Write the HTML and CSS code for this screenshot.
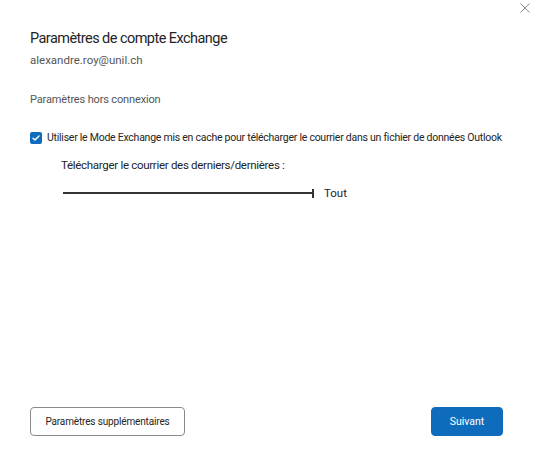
FILE: index.html
```html
<!DOCTYPE html>
<html lang="fr">
<head>
<meta charset="utf-8">
<link rel="stylesheet" href="styles.css">
</head>
<body>
<div class="dialog">
  <button class="close" aria-label="Fermer">
    <svg width="10" height="10" viewBox="0 0 10 10"><path d="M0.5 0.5L9.5 9.5M9.5 0.5L0.5 9.5" stroke="#8a8a8a" stroke-width="1" fill="none"/></svg>
  </button>
  <h1 class="title">Paramètres de compte Exchange</h1>
  <div class="email">alexandre.roy@unil.ch</div>
  <div class="section">Paramètres hors connexion</div>
  <label class="check-row">
    <span class="checkbox">
      <svg width="12" height="12" viewBox="0 0 12 12"><path d="M3 6.2L5 8.1L9 4" stroke="#fff" stroke-width="1.4" fill="none" stroke-linecap="round" stroke-linejoin="round"/></svg>
    </span>
    <span class="check-label">Utiliser le Mode Exchange mis en cache pour télécharger le courrier dans un fichier de données Outlook</span>
  </label>
  <div class="download-label">Télécharger le courrier des derniers/dernières :</div>
  <div class="slider-row">
    <div class="slider"><span class="track"></span><span class="tick"></span></div>
    <span class="slider-value">Tout</span>
  </div>
  <div class="footer">
    <button class="btn btn-secondary">Paramètres supplémentaires</button>
    <button class="btn btn-primary">Suivant</button>
  </div>
</div>
</body>
</html>
```
FILE: styles.css
```css
html, body {
  margin: 0;
  padding: 0;
  background: #ffffff;
}
body {
  font-family: "Roboto", "Open Sans", sans-serif;
  color: #242424;
}
.dialog {
  position: relative;
  box-sizing: border-box;
  width: 538px;
  height: 469px;
  padding: 29px 35px 33px 30px;
  display: flex;
  flex-direction: column;
}
.close {
  position: absolute;
  top: 3px;
  right: 8px;
  width: 10px;
  height: 10px;
  padding: 0;
  border: 0;
  background: transparent;
  display: flex;
}
.title {
  margin: 0;
  font-size: 14.5px;
  line-height: 20px;
  font-weight: 400;
  color: #242424;
  letter-spacing: -0.55px;
}
.email {
  margin-top: 3px;
  font-size: 11.5px;
  line-height: 16px;
  color: #555555;
}
.section {
  margin-top: 24px;
  font-size: 11px;
  line-height: 16px;
  color: #555555;
  letter-spacing: -0.15px;
}
.check-row {
  margin-top: 23px;
  display: flex;
  align-items: center;
  gap: 5px;
}
.checkbox {
  width: 12px;
  height: 12px;
  border-radius: 2px;
  background: #0f6cbd;
  display: flex;
  flex-shrink: 0;
}
.check-label {
  font-size: 10.5px;
  line-height: 14px;
  color: #242424;
  white-space: nowrap;
  letter-spacing: -0.25px;
}
.download-label {
  margin-top: 12px;
  margin-left: 31px;
  font-size: 11.5px;
  line-height: 16px;
  color: #242424;
  letter-spacing: -0.3px;
}
.slider-row {
  margin-top: 12px;
  margin-left: 33px;
  display: flex;
  align-items: center;
  gap: 10px;
}
.slider {
  position: relative;
  width: 251px;
  height: 9px;
  display: flex;
  align-items: center;
}
.track {
  width: 100%;
  height: 2px;
  background: #333333;
}
.tick {
  position: absolute;
  right: 0;
  top: 0;
  width: 2px;
  height: 9px;
  background: #333333;
}
.slider-value {
  font-size: 11.5px;
  line-height: 16px;
  color: #242424;
}
.footer {
  margin-top: auto;
  display: flex;
  justify-content: space-between;
}
.btn {
  box-sizing: border-box;
  height: 29px;
  border-radius: 4px;
  font-family: inherit;
  font-size: 10.5px;
  padding: 0;
  cursor: pointer;
}
.btn-secondary {
  width: 155px;
  background: #ffffff;
  border: 1px solid #8a8a8a;
  color: #242424;
  font-size: 10px;
  letter-spacing: -0.15px;
}
.btn-primary {
  width: 72px;
  background: #0f6cbd;
  border: 1px solid #0f6cbd;
  color: #ffffff;
}
```
